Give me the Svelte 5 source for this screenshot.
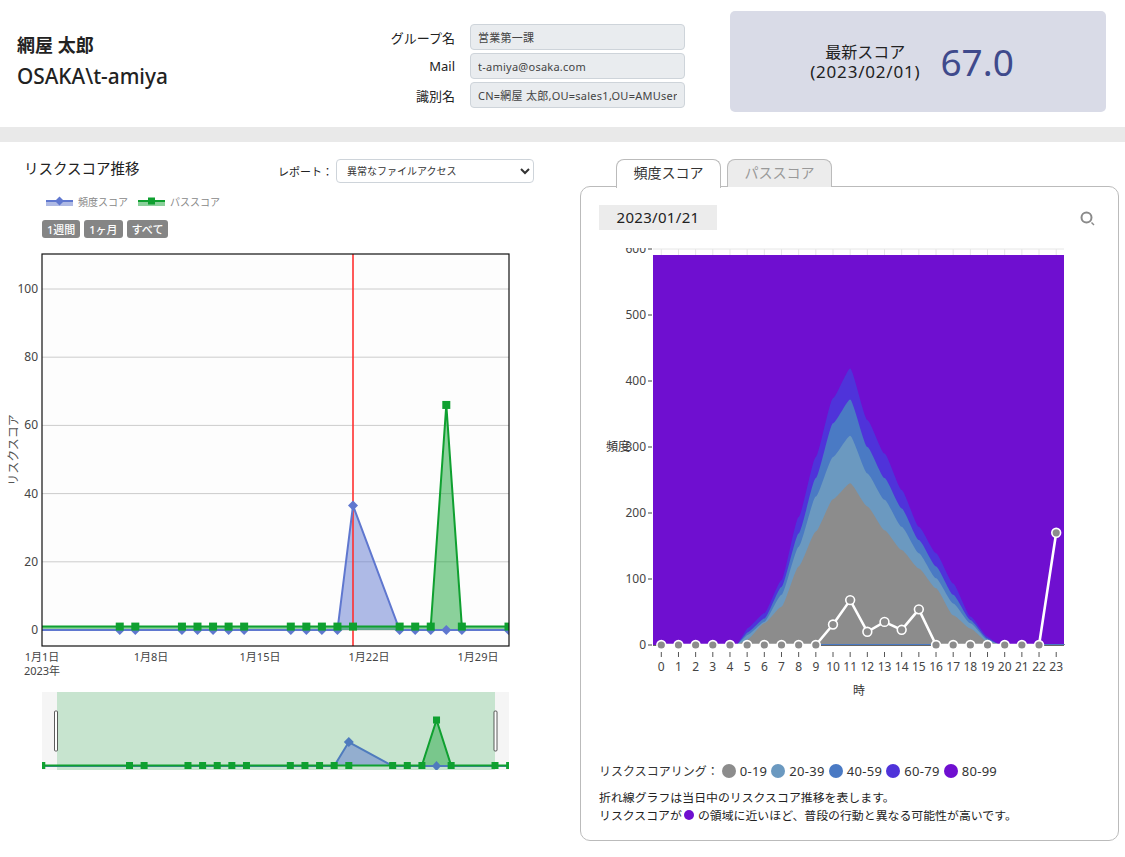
<script>
  // risk score by day of January, only days that have a data point
  const days = [6, 7, 10, 11, 12, 13, 14, 17, 18, 19, 20, 21, 24, 25, 26, 27, 28, 31];
  const dayX = (d) => 42 + (d - 1) * 15.55;
  const scoreY = (v) => 630 - v * 3.41;

  const freqScore = { 21: 36.5 };
  const pathScore = { 27: 66 };

  const freqPts = [1, ...days].map((d) => [dayX(d), scoreY(freqScore[d] ?? 0)]);
  const pathPts = [1, ...days].map((d) => [dayX(d), scoreY(pathScore[d] ?? 1)]);

  const line = (pts) => pts.map((p) => p.join(',')).join(' ');
  const area = (pts, base) =>
    `${pts[0][0]},${base} ${line(pts)} ${pts[pts.length - 1][0]},${base}`;

  // the navigator runs one day further on both sides
  const navDays = [0, ...days, 32];
  const navX = (d) => 129.5 + (d - 6) * 14.62;
  const navFreq = navDays.map((d) => [navX(d), d === 21 ? 742 : 766]);
  const navPath = navDays.map((d) => [navX(d), d === 27 ? 720 : 765.5]);

  const weekTicks = [
    { x: 42, label: '1月1日' },
    { x: 151, label: '1月8日' },
    { x: 260, label: '1月15日' },
    { x: 369, label: '1月22日' },
    { x: 478, label: '1月29日' }
  ];

  // frequency chart
  const hours = Array.from({ length: 24 }, (_, i) => i);
  const hourX = (h) => 661.3 + h * 17.17;
  const freqY = (v) => 645 - v * 0.66;

  const bands = [
    { color: '#4f33da', top: [25, 48, 98, 194, 285, 374, 419, 341, 290, 235, 179, 139, 93, 43, 13] },
    { color: '#4a7ac4', top: [19, 40, 88, 169, 253, 336, 372, 300, 253, 207, 159, 119, 76, 38, 10] },
    { color: '#6b99c0', top: [15, 35, 76, 149, 225, 285, 317, 260, 220, 179, 139, 101, 63, 33, 8] },
    { color: '#8c8c8c', top: [8, 33, 58, 119, 172, 221, 245, 210, 174, 144, 116, 86, 45, 25, 5] }
  ];

  function bandPath(top) {
    const pts = top.map((v, i) => [hourX(i + 5), freqY(v)]);
    let d = `M${hourX(4.4)},645 L${pts[0][0]},${pts[0][1]}`;
    for (let i = 1; i < pts.length; i++) {
      const [x0, y0] = pts[i - 1];
      const [x1, y1] = pts[i];
      d += ` C${x0 + 3},${y0} ${x1 - 3},${y1} ${x1},${y1}`;
    }
    return d + ` L${hourX(19.6)},644 L${hourX(23.5)},644 L${hourX(23.5)},645 Z`;
  }

  const hourly = [0, 0, 0, 0, 0, 0, 0, 0, 0, 0, 31, 68, 20, 35, 23, 54, 0, 0, 0, 0, 0, 0, 0, 170];
  const hourlyPts = hourly.map((v, h) => [hourX(h), freqY(v)]);

  const rings = [
    { color: '#8c8c8c', label: '0-19' },
    { color: '#6b99c0', label: '20-39' },
    { color: '#4a7ac4', label: '40-59' },
    { color: '#4f33da', label: '60-79' },
    { color: '#6f0fd0', label: '80-99' }
  ];
</script>

<header class="top">
  <div class="who">
    <div class="name">網屋 太郎</div>
    <div class="account">OSAKA\t-amiya</div>
  </div>
  <div class="fields">
    <span class="field-label">グループ名</span>
    <input class="field" readonly value="営業第一課" />
    <span class="field-label">Mail</span>
    <input class="field" readonly value="t-amiya@osaka.com" />
    <span class="field-label">識別名</span>
    <input class="field" readonly value="CN=網屋 太郎,OU=sales1,OU=AMUsers,DC=osaka,DC=com" />
  </div>
  <div class="latest">
    <div class="latest-label">最新スコア<br /><span>(2023/02/01)</span></div>
    <div class="latest-value">67.0</div>
  </div>
</header>

<div class="divider"></div>

<main class="content">
  <section class="left">
    <div class="title-row">
      <h2>リスクスコア推移</h2>
      <label class="report">
        レポート：
        <select>
          <option>異常なファイルアクセス</option>
        </select>
      </label>
    </div>

    <div class="legend">
      <svg width="27" height="12" viewBox="0 0 27 12">
        <rect x="0" y="6" width="27" height="5" fill="#aeb9e4" />
        <line x1="0" y1="6" x2="27" y2="6" stroke="#5f77cf" stroke-width="2" />
        <path d="M13.5 1.5 L18 6 L13.5 10.5 L9 6 Z" fill="#5f77cf" />
      </svg>
      <span>頻度スコア</span>
      <svg width="27" height="12" viewBox="0 0 27 12">
        <rect x="0" y="6" width="27" height="5" fill="#8ad09a" />
        <line x1="0" y1="6" x2="27" y2="6" stroke="#0fa030" stroke-width="2" />
        <rect x="10" y="2.5" width="7" height="7" fill="#0fa030" />
      </svg>
      <span>パススコア</span>
    </div>

    <div class="ranges">
      <button>1週間</button>
      <button>1ヶ月</button>
      <button>すべて</button>
    </div>

    <svg class="trend" width="540" height="540" viewBox="0 245 540 540">
      <clipPath id="plot-clip"><rect x="42" y="254" width="467" height="392" /></clipPath>
      <clipPath id="nav-clip"><rect x="42" y="692" width="467" height="78" /></clipPath>

      <rect x="42" y="254" width="467" height="392" fill="#fdfdfd" />
      {#each [0, 20, 40, 60, 80, 100] as v}
        <line x1="42" x2="509" y1={scoreY(v)} y2={scoreY(v)} stroke="#cccccc" />
        <text class="tick" x="38" y={scoreY(v) + 4} text-anchor="end">{v}</text>
      {/each}

      <text class="axis-title" transform="translate(18 450) rotate(-90)" text-anchor="middle">リスクスコア</text>

      <g clip-path="url(#plot-clip)">
        <polygon points={area(freqPts, 630)} fill="#5f77cf" fill-opacity="0.5" />
        <polygon points={area(pathPts, 630)} fill="#0fa030" fill-opacity="0.48" />
        <line x1="353" x2="353" y1="254" y2="646" stroke="#ff3030" stroke-opacity="0.8" stroke-width="2" />
        <polyline points={line(freqPts)} fill="none" stroke="#5f77cf" stroke-width="2" />
        <polyline points={line(pathPts)} fill="none" stroke="#0fa030" stroke-width="2" />

        {#each freqPts.slice(1) as [x, y]}
          <path d="M{x} {y - 5} L{x + 5} {y} L{x} {y + 5} L{x - 5} {y} Z" fill="#5f77cf" />
        {/each}
        {#each pathPts.slice(1) as [x, y]}
          <rect x={x - 4} y={y - 4} width="8" height="8" fill="#0fa030" />
        {/each}
      </g>

      <rect x="42" y="254" width="467" height="392" fill="none" stroke="#111" stroke-width="1.2" />

      {#each weekTicks as t}
        <text class="week" x={t.x} y="661" text-anchor="middle">{t.label}</text>
      {/each}
      <text class="week" x="42" y="675" text-anchor="middle">2023年</text>

      <!-- navigator -->
      <rect x="42" y="692" width="467" height="78" fill="#f5f5f5" />
      <rect x="57" y="692" width="438" height="78" fill="#c7e4cf" />
      <g clip-path="url(#nav-clip)">
        <polygon points={area(navFreq, 766)} fill="#5f77cf" fill-opacity="0.5" />
        <polygon points={area(navPath, 766)} fill="#0fa030" fill-opacity="0.42" />
        <polyline points={line(navFreq)} fill="none" stroke="#4f7bbd" stroke-width="2" />
        <polyline points={line(navPath)} fill="none" stroke="#0fa030" stroke-width="2" />
        <path d="M348.8 737 L353.8 742 L348.8 747 L343.8 742 Z" fill="#4f7bbd" />
        <path d="M436.5 761 L441 766 L436.5 771 L432 766 Z" fill="#4f7bbd" />
        {#each navPath as [x, y]}
          <rect x={x - 3.5} y={y - 3.5} width="7" height="7" fill="#0fa030" />
        {/each}
      </g>
      <rect x="54.5" y="711" width="3" height="40" rx="1" fill="#fff" stroke="#333" stroke-width="0.8" />
      <rect x="494" y="711" width="3" height="40" rx="1" fill="#fff" stroke="#333" stroke-width="0.8" />
    </svg>
  </section>

  <section class="right">
    <div class="tabs">
      <div class="tab active">頻度スコア</div>
      <div class="tab">パススコア</div>
    </div>
    <div class="panel">
      <div class="date-row">
        <div class="date">2023/01/21</div>
        <svg class="search" width="18" height="18" viewBox="0 0 18 18">
          <circle cx="7.5" cy="7.5" r="5" fill="none" stroke="#8a8a8a" stroke-width="2" />
          <line x1="12.5" y1="12.5" x2="15" y2="15" stroke="#8a8a8a" stroke-width="1.4" />
        </svg>
      </div>

      <svg class="freq" width="500" height="470" viewBox="590 235 500 470">
        <clipPath id="top-clip"><rect x="590" y="248" width="500" height="460" /></clipPath>

        {#each hours as h}
          <line x1={hourX(h)} x2={hourX(h)} y1="249" y2="255" stroke="#e6e6e6" />
          <line x1={hourX(h)} x2={hourX(h)} y1="652" y2="657" stroke="#555" />
          <text class="tick" x={hourX(h)} y="671" text-anchor="middle">{h}</text>
        {/each}
        <line x1="653" x2="1064" y1="249" y2="249" stroke="#e6e6e6" />

        <g clip-path="url(#top-clip)">
          {#each [0, 100, 200, 300, 400, 500, 600] as v}
            <line x1="648" x2="652" y1={freqY(v)} y2={freqY(v)} stroke="#444" />
            <text class="tick" x="646" y={freqY(v) + 4} text-anchor="end">{v}</text>
          {/each}
        </g>

        <text class="axis-title plain" x="606" y="451">頻度</text>
        <text class="axis-title plain" x="859" y="695" text-anchor="middle">時</text>

        <rect x="653" y="255" width="411" height="390" fill="#6f0fd0" />
        {#each bands as b}
          <path d={bandPath(b.top)} fill={b.color} />
        {/each}
        <line x1={hourX(4.6)} x2="1064" y1="644.5" y2="644.5" stroke="#4a7ac4" />
        <line x1="653" x2="1064" y1="645.5" y2="645.5" stroke="#666" />

        <polyline points={line(hourlyPts)} fill="none" stroke="#fff" stroke-width="2.6" />
        {#each hourlyPts as [x, y]}
          <circle cx={x} cy={y} r="4.4" fill="#8c8c8c" stroke="#fff" stroke-width="1.6" />
        {/each}
      </svg>

      <div class="rings">
        <span class="rings-label">リスクスコアリング：</span>
        {#each rings as r}
          <span class="ring"><i style="background: {r.color}"></i>{r.label}</span>
        {/each}
      </div>
      <p class="note">
        折れ線グラフは当日中のリスクスコア推移を表します。<br />
        リスクスコアが<i class="dot"></i>の領域に近いほど、普段の行動と異なる可能性が高いです。
      </p>
    </div>
  </section>
</main>

<style>
  :global(body) {
    margin: 0;
    background: #fff;
    color: #222;
    font-family: "Noto Sans", "Noto Sans CJK JP", sans-serif;
  }

  .top {
    display: flex;
    align-items: flex-start;
    height: 127px;
    box-sizing: border-box;
    padding: 11px 19px 0 17px;
  }

  .who {
    width: 330px;
    padding-top: 22px;
  }

  .name {
    font-size: 18px;
    line-height: 24px;
    font-weight: 700;
  }

  .account {
    font-size: 20.8px;
    line-height: 26px;
    margin-top: 6px;
    font-weight: 500;
  }

  .fields {
    display: grid;
    grid-template-columns: 108px 215px;
    column-gap: 15px;
    row-gap: 3px;
    align-items: center;
    margin-top: 13px;
    font-size: 13px;
  }

  .field-label {
    text-align: right;
  }

  .field {
    box-sizing: border-box;
    width: 215px;
    height: 26px;
    padding: 0 7px;
    font: 11px "Noto Sans", "Noto Sans CJK JP", sans-serif;
    letter-spacing: 0.25px;
    color: #444;
    background: #e9ecef;
    border: 1px solid #ced4da;
    border-radius: 4px;
    outline: none;
  }

  .latest {
    display: flex;
    align-items: center;
    justify-content: center;
    gap: 20px;
    width: 376px;
    height: 101px;
    box-sizing: border-box;
    padding-right: 12px;
    margin-left: 45px;
    background: #d9dbe7;
    border-radius: 5px;
  }

  .latest-label {
    font-size: 16px;
    line-height: 20px;
    text-align: center;
  }

  .latest-label span {
    font-size: 17px;
    letter-spacing: 0.8px;
  }

  .latest-value {
    font-size: 37px;
    color: #3f4a8c;
    line-height: 1;
  }

  .divider {
    height: 15px;
    background: #e9e9e9;
  }

  .content {
    display: flex;
    align-items: flex-start;
  }

  .left {
    width: 580px;
    flex: none;
  }

  h2 {
    margin: 0 0 4px;
    font-size: 14.5px;
    font-weight: 400;
    line-height: 20px;
  }

  .title-row {
    display: flex;
    justify-content: space-between;
    align-items: center;
    width: 510px;
    padding: 15px 0 0 24px;
  }

  .report {
    display: flex;
    align-items: center;
    gap: 3px;
    font-size: 11px;
    margin-top: 2px;
  }

  select {
    width: 198px;
    height: 24px;
    padding: 0 6px;
    font: 10px "Noto Sans", "Noto Sans CJK JP", sans-serif;
    color: #333;
    background: #fff;
    border: 1px solid #ced4da;
    border-radius: 4px;
  }

  .legend {
    display: flex;
    align-items: center;
    gap: 5px;
    margin: 10px 0 0 46px;
    font-size: 10px;
    color: #888;
    height: 16px;
  }

  .legend span {
    margin-right: 5px;
  }

  .ranges {
    display: flex;
    gap: 4px;
    margin: 11px 0 0 42px;
  }

  button {
    height: 18px;
    padding: 0 5px;
    font: 500 11px "Noto Sans", "Noto Sans CJK JP", sans-serif;
    color: #fff;
    background: #858585;
    border: none;
    border-radius: 3px;
  }

  .trend {
    display: block;
    margin-top: 7px;
  }

  .tick {
    font-size: 12px;
    fill: #444;
  }

  .week {
    font-size: 11px;
    fill: #444;
  }

  .axis-title {
    font-size: 12px;
    fill: #555;
  }

  .axis-title.plain {
    font-size: 12px;
    fill: #333;
  }

  .right {
    width: 539px;
    flex: none;
    padding-top: 17px;
  }

  .tabs {
    display: flex;
    gap: 6px;
    padding-left: 36px;
    position: relative;
    z-index: 1;
    margin-bottom: -1px;
  }

  .tab {
    box-sizing: border-box;
    width: 105px;
    height: 28px;
    line-height: 26px;
    text-align: center;
    font-size: 14px;
    color: #999;
    background: #ececec;
    border: 1px solid #bbb;
    border-bottom: none;
    border-radius: 8px 8px 0 0;
  }

  .tab.active {
    color: #333;
    background: #fff;
    height: 29px;
    margin-bottom: -1px;
  }

  .panel {
    box-sizing: border-box;
    height: 655px;
    padding: 18px 18px 0 18px;
    border: 1px solid #bbb;
    border-radius: 10px;
  }

  .date-row {
    display: flex;
    align-items: center;
    justify-content: space-between;
    padding-right: 3px;
  }

  .date {
    width: 118px;
    height: 25px;
    line-height: 25px;
    text-align: center;
    font-size: 15px;
    letter-spacing: 0.3px;
    background: #ececec;
  }

  .search {
    margin-top: 2px;
  }

  .freq {
    display: block;
    margin: 5px 0 0 -9px;
  }

  .rings {
    display: flex;
    align-items: center;
    gap: 4px;
    margin-top: 57px;
    font-size: 13px;
    letter-spacing: 0.3px;
    color: #333;
  }

  .rings-label {
    font-size: 12px;
    letter-spacing: 0;
    margin-right: -1px;
  }

  .ring {
    display: flex;
    align-items: center;
    gap: 4px;
  }

  .ring i {
    width: 14px;
    height: 14px;
    border-radius: 50%;
  }

  .note {
    margin: 8px 0 0;
    font-size: 11.9px;
    line-height: 18px;
    color: #222;
  }

  .dot {
    display: inline-block;
    width: 10px;
    height: 10px;
    margin: 0 4px 3px 2px;
    border-radius: 50%;
    background: #6f0fd0;
    vertical-align: middle;
  }
</style>
